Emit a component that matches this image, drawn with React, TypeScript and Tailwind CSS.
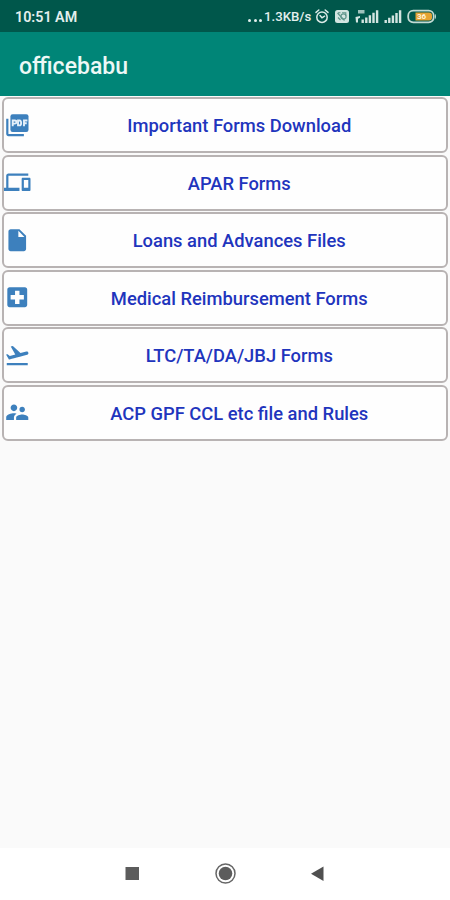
import React from "react";
import type { IconType } from "react-icons";
import {
  MdInsertDriveFile,
  MdLocalHospital,
  MdFlightTakeoff,
  MdSupervisorAccount,
} from "react-icons/md";

type Glyph = IconType | ((props: { className?: string }) => React.ReactElement);
type Item = { label: string; icon: Glyph };

function PdfIcon({ className }: { className?: string }) {
  return (
    <svg className={className} viewBox="0 0 24 24" fill="currentColor">
      <rect x="5.8" y="2" width="16.4" height="16" rx="2" />
      <path d="M4 6H2v14c0 1.100.900 2 2 2h14v-2H4V6z" />
      <g stroke="#e6f0fa" strokeWidth="1.700" fill="none">
        <path d="M7.900 13V7.700h2a1.300 1.300 0 0 1 0 2.800h-2" />
        <path d="M12.700 7.700v4.400h1.400c1.900 0 1.900-4.400 0-4.400z" />
        <path d="M18.100 13V7.700h3.100M18.100 10.200h2.500" />
      </g>
    </svg>
  );
}

function DevicesIcon({ className }: { className?: string }) {
  return (
    <svg className={className} viewBox="0 0 24 24" fill="currentColor">
      <path d="M4 6h18V4H4c-1.100 0-2 .9-2 2v11H0v3h14v-3H4V6zm19 2h-6c-.55 0-1 .45-1 1v10c0 .55.45 1 1 1h6c.55 0 1-.45 1-1V9c0-.55-.45-1-1-1zm-1 9h-4v-7h4v7z" />
    </svg>
  );
}

const items: Item[] = [
  { label: "Important Forms Download", icon: PdfIcon },
  { label: "APAR Forms", icon: DevicesIcon },
  { label: "Loans and Advances Files", icon: MdInsertDriveFile },
  { label: "Medical Reimbursement Forms", icon: MdLocalHospital },
  { label: "LTC/TA/DA/JBJ Forms", icon: MdFlightTakeoff },
  { label: "ACP GPF CCL etc file and Rules", icon: MdSupervisorAccount },
];

function StatusIcons() {
  return (
    <svg className="block h-[32px] w-[130px]" viewBox="312 0 130 32" fill="none">
      {/* alarm clock */}
      <g stroke="#dcebe8" strokeWidth="1.5" strokeLinecap="round">
        <circle cx="322" cy="17.2" r="5.2" />
        <path d="M316 12.4l2.8-2.4M328 12.4l-2.8-2.4M320 15.6l2 2.2 2.6-1.6" />
      </g>
      {/* VoLTE badge */}
      <rect x="335" y="10" width="14" height="13" rx="2.5" fill="#d3e5e1" />
      <g stroke="#5f958b" strokeWidth="1.1">
        <path d="M337.500 13l7 7.500M338 17.500l2.500 2.500M342 12.800h3.800v3.500M338 12.800h2.500" />
        <circle cx="343.500" cy="16.500" r="2.600" />
      </g>
      {/* first SIM with 4G mark, then second SIM */}
      <g fill="#d3e5e1">
        <path d="M358 10h6.500v3.500H358z" opacity=".75" />
        <path d="M355.5 17l4.500-1v1.8l-2 1v3.700h-2z" />
        <path d="M361.5 19.5h2.4V23h-2.4zM365.1 17.5h2.4V23h-2.4zM368.7 15.2h2.4V23h-2.4zM372.3 12.800h2.400V23h-2.400zM375.900 10.300h2.400V23h-2.400z" />
        <path d="M384.500 20h2.400v3h-2.400zM388.100 17.800h2.400V23h-2.400zM391.700 15.400h2.400V23h-2.400zM395.300 13h2.400v10h-2.400zM398.900 10.300h2.400V23h-2.400z" />
      </g>
      {/* battery */}
      <rect x="408.2" y="10.7" width="25.5" height="11.6" rx="5" stroke="#c3dbd4" strokeWidth="1.8" />
      <path d="M435 14v5c1.3-.5 1.3-4.500 0-5z" fill="#c3dbd4" />
      <path d="M415.500 12.500h13.500a3 3 0 0 1 3 3v2a3 3 0 0 1-3 3h-13.500z" fill="#e5a333" />
      <text x="417" y="19.4" fontFamily="Roboto, sans-serif" fontWeight="700" fontSize="8" fill="#fff4da">
        36
      </text>
    </svg>
  );
}

function MenuRow({ label, icon: Icon }: Item) {
  return (
    <button className="flex h-[56px] w-full shrink-0 items-center rounded-[6px] border-2 border-[#b8b3b3] bg-[#fefefe]">
      <Icon className="size-[26.5px] shrink-0 text-[#3d80bd]" />
      <span className="flex-1 whitespace-nowrap pl-[2px] pt-[2px] text-center text-[18.35px] font-medium leading-6 text-[#1f35bd]">
        {label}
      </span>
    </button>
  );
}

export default function App() {
  return (
    <div className="flex h-[900px] w-[450px] flex-col overflow-hidden bg-[#fafafa] font-['Roboto',sans-serif]">
      <div className="flex h-[32px] shrink-0 items-center bg-[#00574b] pl-[15px] pr-[8px] text-[#e3efed]">
        <span className="pt-[2px] text-[14.3px] font-semibold leading-[30px]">10:51 AM</span>
        <span className="ml-auto flex items-center gap-[2.5px] pr-[2px] pt-[8px]">
          <i className="size-[3px] rounded-full bg-[#e3efed]" />
          <i className="size-[3px] rounded-full bg-[#e3efed]" />
          <i className="size-[3px] rounded-full bg-[#e3efed]" />
        </span>
        <span className="w-[48px] whitespace-nowrap pt-[2px] text-[13.2px] font-medium leading-[30px]">1.3KB/s</span>
        <StatusIcons />
      </div>
      <header className="flex h-[64px] shrink-0 items-center bg-[#008577] pl-[19px] pt-[4px]">
        <h1 className="text-[23px] font-medium leading-none text-[#edf8f6]">officebabu</h1>
      </header>
      <main className="flex flex-1 flex-col gap-[1.5px] px-[2px] pt-[1px]">
        {items.map((item) => (
          <MenuRow key={item.label} {...item} />
        ))}
      </main>
      <nav className="flex h-[52px] shrink-0 items-center justify-center bg-white pl-[2px]">
        <svg className="h-[24px] w-[204px]" viewBox="124 862 204 24" fill="none">
          <path d="M125.500 867h13.500v13h-13.500z" fill="#5c5c5c" />
          <circle cx="225.500" cy="873.500" r="9.500" stroke="#666" strokeWidth="1.500" />
          <circle cx="225.500" cy="873.500" r="6.800" fill="#5c5c5c" />
          <path d="M323.500 866.500v14.500l-12.500-7.200z" fill="#505050" />
        </svg>
      </nav>
    </div>
  );
}
